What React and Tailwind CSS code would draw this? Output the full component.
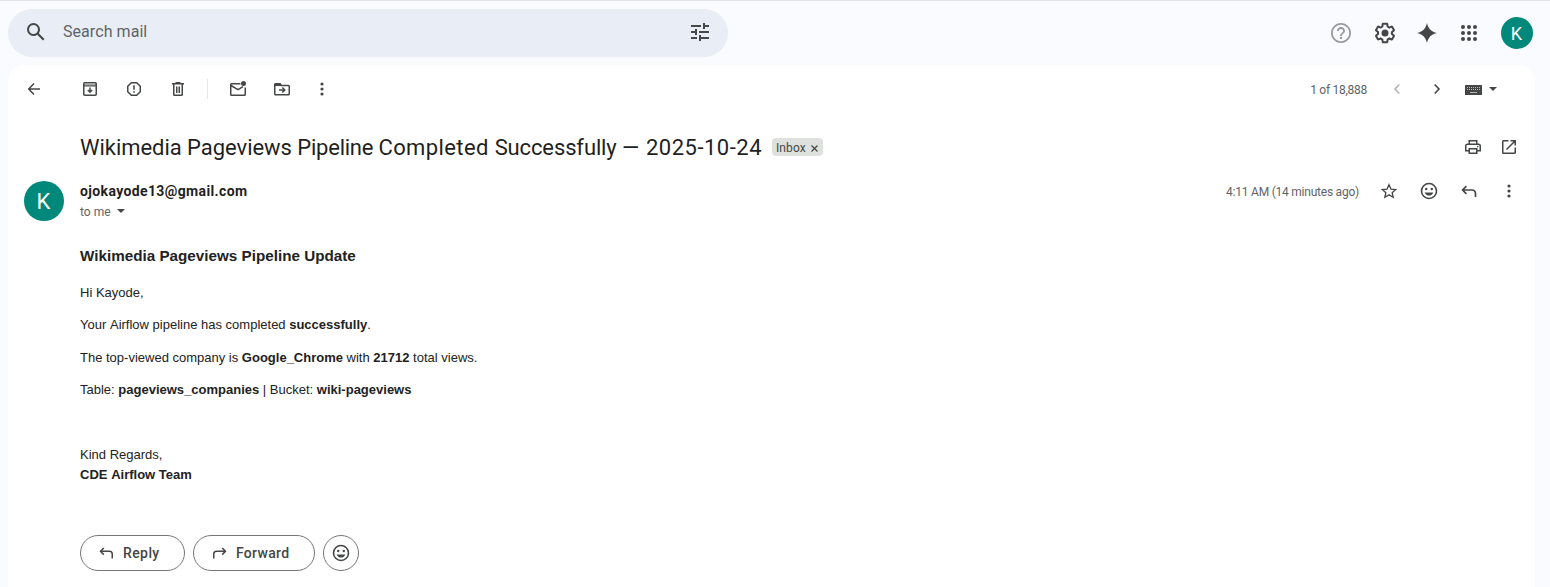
import React from "react";

const INK = "#444746";

function Icon({ children, size = 20, box = "0 0 20 20", className = "" }) {
  return (
    <svg width={size} height={size} viewBox={box} className={"block shrink-0 " + className} fill="none" stroke={INK} strokeWidth="1.5" aria-hidden="true">
      {children}
    </svg>
  );
}

const Search = () => (
  <Icon size={24} box="0 0 24 24">
    <path stroke="none" fill={INK} d="M20.49 19l-5.73-5.73C15.53 12.2 16 10.91 16 9.5A6.5 6.5 0 1 0 9.5 16c1.41 0 2.7-.47 3.77-1.24L19 20.49 20.49 19zM5 9.5C5 7.01 7.01 5 9.5 5S14 7.01 14 9.5 11.99 14 9.5 14 5 11.99 5 9.5z" />
  </Icon>
);
const Tune = () => (
  <Icon size={24} box="0 0 24 24">
    <path stroke="none" fill={INK} d="M3 17v2h6v-2H3zM3 5v2h10V5H3zm10 16v-2h8v-2h-8v-2h-2v6h2zM7 9v2H3v2h4v2h2V9H7zm14 4v-2H11v2h10zm-6-4h2V7h4V5h-4V3h-2v6z" />
  </Icon>
);
const Help = () => (
  <Icon size={24} box="0 0 24 24">
    <path stroke="none" fill="#989a9b" d="M11 18h2v-2h-2v2zm1-16C6.48 2 2 6.48 2 12s4.48 10 10 10 10-4.48 10-10S17.52 2 12 2zm0 18.200c-4.530 0-8.200-3.670-8.200-8.200s3.670-8.200 8.200-8.200 8.200 3.670 8.200 8.200-3.670 8.200-8.200 8.200zm0-14.200c-2.210 0-4 1.790-4 4h1.900c0-1.160.940-2.100 2.100-2.100s2.100.940 2.100 2.100c0 2-3.050 1.750-3.050 5h1.900c0-2.250 3.050-2.500 3.050-5 0-2.210-1.790-4-4-4z" />
  </Icon>
);
const Gear = () => (
  <Icon size={24} box="0 0 24 24">
    <path stroke="none" fill={INK} d="M13.850 22.250h-3.700c-.740 0-1.360-.540-1.450-1.270l-.270-1.890c-.270-.140-.530-.290-.790-.460l-1.800.720c-.700.260-1.470-.030-1.810-.650L2.200 15.530c-.350-.660-.200-1.440.360-1.880l1.530-1.190c-.010-.150-.020-.300-.020-.460 0-.150.010-.310.020-.460l-1.520-1.190c-.590-.450-.740-1.260-.370-1.880l1.850-3.190c.340-.620 1.110-.900 1.790-.630l1.810.730c.260-.170.520-.320.780-.460l.270-1.910c.090-.700.710-1.250 1.440-1.250h3.700c.740 0 1.360.540 1.450 1.270l.270 1.890c.270.140.530.290.790.460l1.800-.720c.710-.260 1.480.030 1.820.650l1.840 3.180c.360.660.200 1.440-.360 1.880l-1.520 1.190c.010.150.020.300.020.460s-.010.310-.020.460l1.520 1.190c.560.450.720 1.230.370 1.860l-1.860 3.220c-.340.620-1.110.900-1.800.630l-1.800-.720c-.260.170-.520.320-.780.460l-.270 1.910c-.100.680-.720 1.220-1.460 1.220zm-3.230-2h2.760l.370-2.550.530-.220c.440-.180.880-.440 1.340-.780l.450-.340 2.380.960 1.380-2.400-2.030-1.580.070-.560c.030-.260.060-.510.060-.780s-.030-.530-.060-.780l-.070-.560 2.030-1.580-1.390-2.400-2.390.960-.450-.350c-.420-.320-.870-.580-1.330-.770l-.520-.220-.370-2.550h-2.760l-.370 2.550-.530.210c-.440.190-.880.440-1.340.790l-.450.330-2.380-.950-1.390 2.390 2.030 1.580-.070.560a7 7 0 0 0-.060.790c0 .260.020.530.060.780l.070.560-2.030 1.580 1.380 2.400 2.390-.960.450.350c.430.330.860.580 1.330.770l.530.220.380 2.550z" />
    <circle cx="12" cy="12" r="3.500" fill={INK} stroke="none" />
  </Icon>
);
const Spark = () => (
  <Icon size={24} box="0 0 24 24">
    <path stroke="none" fill={INK} d="M12 2c1.200 5.600 4.400 8.800 10 10-5.600 1.200-8.800 4.400-10 10-1.200-5.600-4.400-8.800-10-10C7.600 10.800 10.800 7.600 12 2z" />
  </Icon>
);
const Apps = () => (
  <Icon size={24} box="0 0 24 24">
    {[6, 12, 18].map((y) => [6, 12, 18].map((x) => <circle key={x + "-" + y} cx={x} cy={y} r="2" fill={INK} stroke="none" />))}
  </Icon>
);
const Back = () => (
  <Icon><path d="M16 10H5M10 4.500L4.700 10l5.300 5.500" /></Icon>
);
const Archive = () => (
  <Icon>
    <path d="M4 5h12v2H4z" fill="#a5a7a6" stroke="none" />
    <rect x="3.750" y="3.750" width="12.500" height="12.500" rx="1" />
    <path d="M4 7h12" strokeWidth="1" />
    <path d="M10 8.500v4M7.800 11L10 13.200l2.200-2.200" />
  </Icon>
);
const Report = () => (
  <Icon>
    <path d="M7.300 3.750h5.400l3.550 3.550v5.400l-3.550 3.550H7.300L3.750 12.700V7.300z" strokeLinejoin="round" />
    <path d="M10 6.200v4.600M10 12.300v1.500" />
  </Icon>
);
const Trash = () => (
  <Icon>
    <path d="M4 4.750h12M7.500 3.750h5M5.750 5v10.500q0 .750.750.750h7q.750 0 .750-.750V5M8.750 7.500v6.500M11.250 7.500v6.500" />
  </Icon>
);
const Unread = () => (
  <Icon>
    <path d="M12.500 4.750H3.500q-.750 0-.750.750v10q0 .750.750.750h13q.750 0 .750-.750V8.500M3 6.500l7 4.200 5-3" />
    <circle cx="15.500" cy="4.500" r="2.500" fill={INK} stroke="none" />
  </Icon>
);
const MoveTo = () => (
  <Icon>
    <path d="M2.750 5v10q0 .750.750.750h13q.750 0 .750-.750V7.250q0-.750-.750-.750H9.500L8 4.750H3.500q-.750 0-.750.750" />
    <path d="M3 5.800h6" strokeWidth="2.500" />
    <path d="M7 11h5.500M10.300 8.500l2.500 2.500-2.500 2.500" />
  </Icon>
);
const More = () => (
  <Icon>
    {[5, 10, 15].map((y) => <circle key={y} cx="10" cy={y} r="1.600" fill={INK} stroke="none" />)}
  </Icon>
);
const Caret = () => (
  <svg width="8" height="4" viewBox="0 0 8 4" className="block shrink-0" aria-hidden="true"><path d="M0 0h8L4 4z" fill={INK} /></svg>
);
const Keyboard = () => (
  <svg width="17" height="10" viewBox="0 0 17 10" className="block shrink-0" aria-hidden="true">
    <rect width="17" height="10" rx=".5" fill={INK} />
    <path d="M2 2.500h13M2 4.500h13" stroke="#b5b6b6" strokeWidth="1" strokeDasharray="1 1" />
    <path d="M5 7.500h7" stroke="#b5b6b6" />
  </svg>
);
const Print = () => (
  <Icon>
    <path d="M6.250 7V3.750h7.500V7M6 13.750H2.750V9q0-1.750 1.750-1.750h11q1.750 0 1.750 1.750v4.750H14M6.250 11.750h7.500v4.500h-7.500z" />
    <circle cx="14.700" cy="9.600" r=".8" fill={INK} stroke="none" />
  </Icon>
);
const OpenNew = () => (
  <Icon>
    <path d="M9.500 3.750h-5q-.750 0-.750.750v11q0 .750.750.750h11q.750 0 .750-.750v-5M7.500 12.500l8.500-8.500M11.500 3.750h4.750V8.500" />
  </Icon>
);
const Star = () => (
  <Icon><path strokeWidth="1.300" d="M10 3.700l1.950 4.350 4.750.45-3.550 3.150 1.050 4.650L10 13.850 5.800 16.300l1.050-4.650L3.300 8.500l4.750-.45z" /></Icon>
);
const Smile = () => (
  <Icon>
    <circle cx="10" cy="10" r="7.500" strokeWidth="1.600" />
    <circle cx="7.200" cy="8" r="1.200" fill={INK} stroke="none" />
    <circle cx="12.800" cy="8" r="1.200" fill={INK} stroke="none" />
    <path d="M5.700 11.400h8.600C13.600 13.400 12 14.500 10 14.500s-3.600-1.100-4.300-3.100z" fill={INK} stroke="none" />
  </Icon>
);
const ReplyArrow = () => (
  <Icon>
    <path strokeWidth="1.700" d="M7.400 5.200L3.600 9l3.800 3.800M3.900 9h8.900q3.700 0 3.700 3.700V16" />
  </Icon>
);
const SmallArrow = ({ flip }) => (
  <Icon className={flip ? "-scale-x-100" : ""}>
    <path d="M6.800 5l-3.300 3.300 3.300 3.300M3.700 8.300h8.800q2.750 0 2.750 2.750V15.500" />
  </Icon>
);
const Chevron = ({ dir, color }) => (
  <Icon><path stroke={color} strokeWidth="1.600" d={dir === "left" ? "M12.300 5.500L8 10l4.300 4.500" : "M7.700 5.500L12 10l-4.300 4.500"} /></Icon>
);

export default function App() {
  return (
    <div className="flex h-[587px] w-[1550px] flex-col overflow-hidden border-t border-[#e3e4e6] bg-[#f9fbff] font-['Roboto',sans-serif] text-[#1f1f1f]">
      <header className="flex h-16 items-center pl-2 pr-[17px]">
        <div className="flex h-12 w-[720px] items-center rounded-full bg-[#e9eef6] pb-[2px] pl-4 pr-4">
          <Search />
          <span className="ml-[15px] flex-1 text-base tracking-[0.06px] text-[#5f6368]">Search mail</span>
          <Tune />
        </div>
        <div className="ml-auto flex items-center">
          <Help />
          <span className="ml-5"><Gear /></span>
          <span className="ml-[18px]"><Spark /></span>
          <span className="ml-[18px]"><Apps /></span>
          <div className="ml-5 flex h-8 w-8 items-center justify-center rounded-full bg-[#00897b] pr-px pt-px text-[18px] text-white">K</div>
        </div>
      </header>

      <main className="ml-2 flex w-[1527px] flex-1 flex-col rounded-t-2xl bg-white">
        <div className="flex h-12 items-center pl-4 pr-[38px]">
          <Back />
          <div className="ml-9 flex gap-6"><Archive /><Report /><Trash /></div>
          <div className="ml-[19px] mr-5 h-5 w-px bg-[#e6e7e8]" />
          <div className="flex gap-6"><Unread /><MoveTo /></div>
          <span className="ml-5"><More /></span>
          <span className="ml-auto whitespace-nowrap pt-[2px] text-xs tracking-[-0.27px] text-[#5f6368]">1 of 18,888</span>
          <span className="ml-5"><Chevron dir="left" color="#b4b5b5" /></span>
          <span className="ml-5"><Chevron dir="right" color={INK} /></span>
          <span className="ml-[18px] mt-[2px]"><Keyboard /></span>
          <span className="ml-[7px]"><Caret /></span>
        </div>

        <div className="mt-4 flex h-9 items-center pl-[72px] pr-4">
          <h1 className="whitespace-nowrap text-[22px] font-normal">
            <span className="tracking-[-0.04px]">Wikimedia Pageviews </span>
            <span className="tracking-[-0.24px]">Pipeline </span>
            <span className="tracking-[0.4px]">Completed </span>
            <span className="tracking-[-0.13px]">Successfully </span>
            <span className="tracking-[0.7px]">— </span>
            <span className="tracking-[0.5px]">2025-10-24</span>
          </h1>
          <div className="ml-auto mr-[640px] flex h-[18px] w-[51px] items-center rounded bg-[#dfe1df] pl-1 text-xs text-[#444746]">
            <span className="pt-px tracking-[0.1px]">Inbox</span>
            <svg width="7" height="7" viewBox="0 0 7 7" className="ml-[5px] mt-[2px]" stroke={INK} strokeWidth="1.200"><path d="M.5.500l6 6M6.500.500l-6 6" /></svg>
          </div>
          <Print />
          <span className="ml-4"><OpenNew /></span>
        </div>

        <div className="mt-4 flex h-10 items-start pl-4 pr-4">
          <div className="flex h-10 w-10 items-center justify-center rounded-full bg-[#00897b] pr-px pt-px text-[22px] text-white">K</div>
          <div className="ml-4">
            <div className="h-5 text-sm font-bold leading-5 tracking-[0.37px]">ojokayode13@gmail.com</div>
            <div className="flex h-5 items-center text-xs text-[#5f6368]">
              <span className="pt-[2px]">to me</span><span className="ml-[6px]"><Caret /></span>
            </div>
          </div>
          <div className="ml-auto flex h-5 items-center">
            <span className="whitespace-nowrap pt-[2px] text-xs tracking-[-0.23px] text-[#5f6368]">4:11 AM (14 minutes ago)</span>
            <span className="ml-5"><Star /></span>
            <span className="ml-5"><Smile /></span>
            <span className="ml-5"><ReplyArrow /></span>
            <span className="ml-5"><More /></span>
          </div>
        </div>

        <article className="mt-[25px] pl-[72px] font-['Liberation_Sans',Arial,sans-serif] text-[13px] leading-5 text-[#222222]">
          <h3 className="text-[15.21px] font-bold leading-5 tracking-[0.015px]">Wikimedia Pageviews Pipeline Update</h3>
          <p className="mt-[17px]">Hi Kayode,</p>
          <p className="mt-3">Your <span className="ml-[0.1px]">Airflow</span> pipeline has completed <b>successfully</b>.</p>
          <p className="mt-[13px]">The top-viewed company is <b>Google_Chrome</b> with <b>21712</b> total views.</p>
          <p className="mt-3">Table: <b>pageviews_companies</b> | Bucket: <b>wiki-pageviews</b></p>
          <p className="mt-[45px]">Kind Regards,<br /><b>CDE <span className="ml-[0.1px]">Airflow</span> Team</b></p>
        </article>

        <div className="mt-[50px] flex gap-2 pl-[72px] text-sm font-medium text-[#444746]">
          <button className="flex h-9 w-[105px] items-center rounded-full border border-[#747775] pl-4"><SmallArrow /><span className="ml-[6px] tracking-[0.4px]">Reply</span></button>
          <button className="flex h-9 w-[122px] items-center rounded-full border border-[#747775] pl-[15px]"><SmallArrow flip /><span className="ml-[7px] tracking-[0.3px]">Forward</span></button>
          <button className="flex h-9 w-9 items-center justify-center rounded-full border border-[#747775]"><Smile /></button>
        </div>
      </main>
    </div>
  );
}
